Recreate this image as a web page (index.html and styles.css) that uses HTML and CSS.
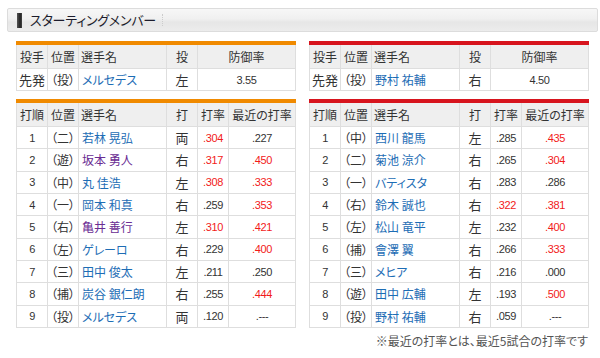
FILE: index.html
```html
<!DOCTYPE html>
<html lang="ja">
<head>
<meta charset="utf-8">
<link rel="stylesheet" href="styles.css">
</head>
<body>
<div class="page">
  <div class="title">
    <span class="marker"></span>
    <span class="title-text">スターティングメンバー</span>
    <span class="sep"></span>
  </div>
  <div class="cols">
    <div class="col">
      <div class="bar orange"></div>
      <table class="tbl pit">
        <colgroup><col class="w31"><col class="w31"><col class="w88"><col class="w31"><col class="w98"></colgroup>
        <tr class="head"><th>投手</th><th>位置</th><th class="l">選手名</th><th>投</th><th>防御率</th></tr>
        <tr><td class="jp">先発</td><td class="pos">（投）</td><td class="name"><a>メルセデス</a></td><td class="jp">左</td><td class="num">3.55</td></tr>
      </table>
      <div class="bar orange mt"></div>
      <table class="tbl bat">
        <colgroup><col class="w31"><col class="w31"><col class="w88"><col class="w31"><col class="w31"><col class="w67"></colgroup>
        <tr class="head"><th>打順</th><th>位置</th><th class="l">選手名</th><th>打</th><th>打率</th><th>最近の打率</th></tr>
        <tr><td class="num">1</td><td class="pos">（二）</td><td class="name"><a>若林 晃弘</a></td><td class="jp">両</td><td class="num red">.304</td><td class="num">.227</td></tr>
        <tr><td class="num">2</td><td class="pos">（遊）</td><td class="name"><a class="v">坂本 勇人</a></td><td class="jp">右</td><td class="num red">.317</td><td class="num red">.450</td></tr>
        <tr><td class="num">3</td><td class="pos">（中）</td><td class="name"><a>丸 佳浩</a></td><td class="jp">左</td><td class="num red">.308</td><td class="num red">.333</td></tr>
        <tr><td class="num">4</td><td class="pos">（一）</td><td class="name"><a>岡本 和真</a></td><td class="jp">右</td><td class="num">.259</td><td class="num red">.353</td></tr>
        <tr><td class="num">5</td><td class="pos">（右）</td><td class="name"><a class="v">亀井 善行</a></td><td class="jp">左</td><td class="num red">.310</td><td class="num red">.421</td></tr>
        <tr><td class="num">6</td><td class="pos">（左）</td><td class="name"><a>ゲレーロ</a></td><td class="jp">右</td><td class="num">.229</td><td class="num red">.400</td></tr>
        <tr><td class="num">7</td><td class="pos">（三）</td><td class="name"><a>田中 俊太</a></td><td class="jp">左</td><td class="num">.211</td><td class="num">.250</td></tr>
        <tr><td class="num">8</td><td class="pos">（捕）</td><td class="name"><a>炭谷 銀仁朗</a></td><td class="jp">右</td><td class="num">.255</td><td class="num red">.444</td></tr>
        <tr><td class="num">9</td><td class="pos">（投）</td><td class="name"><a>メルセデス</a></td><td class="jp">両</td><td class="num">.120</td><td class="num">.---</td></tr>
      </table>
    </div>
    <div class="col">
      <div class="bar red-bar"></div>
      <table class="tbl pit">
        <colgroup><col class="w31"><col class="w31"><col class="w88"><col class="w31"><col class="w98"></colgroup>
        <tr class="head"><th>投手</th><th>位置</th><th class="l">選手名</th><th>投</th><th>防御率</th></tr>
        <tr><td class="jp">先発</td><td class="pos">（投）</td><td class="name"><a>野村 祐輔</a></td><td class="jp">右</td><td class="num">4.50</td></tr>
      </table>
      <div class="bar red-bar mt"></div>
      <table class="tbl bat">
        <colgroup><col class="w31"><col class="w31"><col class="w88"><col class="w31"><col class="w31"><col class="w67"></colgroup>
        <tr class="head"><th>打順</th><th>位置</th><th class="l">選手名</th><th>打</th><th>打率</th><th>最近の打率</th></tr>
        <tr><td class="num">1</td><td class="pos">（中）</td><td class="name"><a>西川 龍馬</a></td><td class="jp">左</td><td class="num">.285</td><td class="num red">.435</td></tr>
        <tr><td class="num">2</td><td class="pos">（二）</td><td class="name"><a>菊池 涼介</a></td><td class="jp">右</td><td class="num">.265</td><td class="num red">.304</td></tr>
        <tr><td class="num">3</td><td class="pos">（一）</td><td class="name"><a>バティスタ</a></td><td class="jp">右</td><td class="num">.283</td><td class="num">.286</td></tr>
        <tr><td class="num">4</td><td class="pos">（右）</td><td class="name"><a>鈴木 誠也</a></td><td class="jp">右</td><td class="num red">.322</td><td class="num red">.381</td></tr>
        <tr><td class="num">5</td><td class="pos">（左）</td><td class="name"><a>松山 竜平</a></td><td class="jp">左</td><td class="num">.232</td><td class="num red">.400</td></tr>
        <tr><td class="num">6</td><td class="pos">（捕）</td><td class="name"><a>會澤 翼</a></td><td class="jp">右</td><td class="num">.266</td><td class="num red">.333</td></tr>
        <tr><td class="num">7</td><td class="pos">（三）</td><td class="name"><a>メヒア</a></td><td class="jp">右</td><td class="num">.216</td><td class="num">.000</td></tr>
        <tr><td class="num">8</td><td class="pos">（遊）</td><td class="name"><a>田中 広輔</a></td><td class="jp">左</td><td class="num">.193</td><td class="num red">.500</td></tr>
        <tr><td class="num">9</td><td class="pos">（投）</td><td class="name"><a>野村 祐輔</a></td><td class="jp">右</td><td class="num">.059</td><td class="num">.---</td></tr>
      </table>
      <p class="note">※最近の打率とは、最近5試合の打率です</p>
    </div>
  </div>
</div>
</body>
</html>
```
FILE: styles.css
```css
html, body {
  margin: 0;
  padding: 0;
  background: #fff;
}
body {
  font-family: "Noto Sans CJK JP", "Liberation Sans", sans-serif;
  font-size: 12px;
  color: #333;
  font-feature-settings: "palt";
}
.page {
  padding: 8px 0 0 7px;
}
.title {
  width: 591px;
  height: 24px;
  box-sizing: border-box;
  border: 1px solid #dcdcdc;
  border-radius: 2px;
  background: linear-gradient(#f7f7f7 0%, #f0f0f0 45%, #e6e6e6 60%, #ececec 100%);
  display: flex;
  align-items: center;
  padding-left: 9px;
}
.marker {
  width: 5px;
  height: 15px;
  background: linear-gradient(90deg, #555, #222 60%, #444);
  margin-right: 8px;
}
.title-text {
  font-size: 13px;
  color: #1c1c2c;
  letter-spacing: -0.2px;
  line-height: 16px;
}
.sep {
  width: 0;
  height: 12px;
  border-left: 1px dotted #ccc;
  margin-left: 6px;
}
.cols {
  display: flex;
  gap: 13px;
  margin-top: 9px;
  padding-left: 9px;
}
.col {
  width: 280px;
}
.bar {
  height: 4px;
}
.orange { background: #f08a00; }
.red-bar { background: #d7141d; }
.mt { margin-top: 8px; }
.tbl {
  width: 280px;
  table-layout: fixed;
  border-collapse: collapse;
}
.w31 { width: 31px; }
.w67 { width: 67px; }
.w88 { width: 88px; }
.w98 { width: 98px; }
.tbl th, .tbl td {
  border: 1px solid #dedede;
  padding: 0;
  text-align: center;
  white-space: nowrap;
  overflow: hidden;
}
.tbl tr:first-child th { border-top: none; }
.tbl th {
  background: #efefef;
  font-weight: normal;
  height: 23px;
  color: #333;
}
.tbl td { height: 21px; }
.bat td { height: 21.33px; }
.tbl .l { text-align: left; padding-left: 2px; }
.tbl .name { text-align: left; padding-left: 3px; }
.name a { color: #1d6db5; text-decoration: none; }
.name a.v { color: #6a2c93; }
.num {
  font-family: "Liberation Sans", sans-serif;
  font-size: 11px;
  letter-spacing: -0.4px;
  color: #333;
}
.num.red { color: #f21a1a; }
.jp { font-size: 13px; }
.pos { text-align: center; }
.note {
  margin: 5px 1px 0 0;
  text-align: right;
  font-size: 12px;
  line-height: 16px;
  color: #555;
}
```
